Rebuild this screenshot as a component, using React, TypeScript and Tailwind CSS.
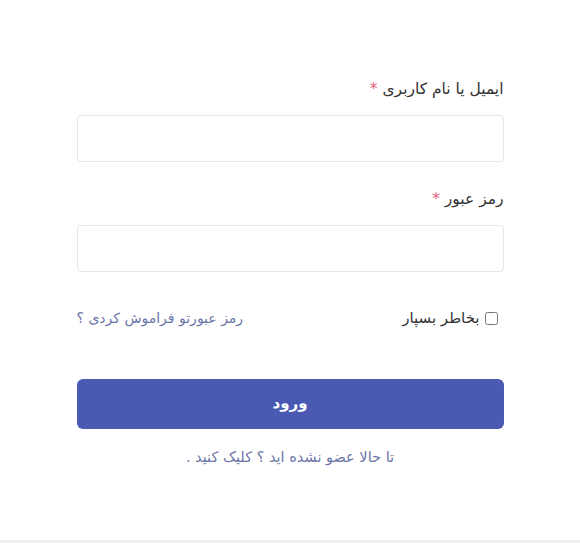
import React, { useState } from 'react';

const App: React.FC = () => {
  const [remember, setRemember] = useState(false);

  return (
    <div className="h-[543px] bg-[#efefef]" style={{ fontFamily: '"DejaVu Sans", "Noto Sans", sans-serif' }}>
      <div dir="rtl" className="h-[540px] bg-white pt-[77px]">
        <form className="mx-auto w-[427px]" onSubmit={(e) => e.preventDefault()}>
          <label className="block text-[15.5px] leading-[24px] text-[#333]">
            ایمیل یا نام کاربری <span className="text-[#e8607d]">*</span>
          </label>
          <input
            type="text"
            className="mt-[14px] block h-[47px] w-full rounded-[4px] border border-[#e6e6e6] bg-white px-3 outline-none"
          />

          <label className="mt-[25px] block text-[15.5px] leading-[24px] text-[#333]">
            رمز عبور <span className="text-[#e8607d]">*</span>
          </label>
          <input
            type="password"
            className="mt-[14px] block h-[47px] w-full rounded-[4px] border border-[#e6e6e6] bg-white px-3 outline-none"
          />

          <div className="mt-[35px] flex items-center justify-between">
            <label className="mr-[6px] flex items-center gap-[5px] text-[15px] text-[#333]">
              <input
                type="checkbox"
                checked={remember}
                onChange={() => setRemember(!remember)}
                className="h-[13px] w-[13px]"
              />
              بخاطر بسپار
            </label>
            <a href="#" className="text-[14px] text-[#6b75a9]">
              رمز عبورتو فراموش کردی ؟
            </a>
          </div>

          <button
            type="submit"
            className="mt-[49px] block h-[50px] w-full rounded-[6px] bg-[#4a5ab3] text-[15px] font-bold text-white"
          >
            ورود
          </button>

          <p className="mt-[18px] text-center text-[14.5px] text-[#6b75a9]">
            تا حالا عضو نشده اید ؟ کلیک کنید .
          </p>
        </form>
      </div>
    </div>
  );
};

export default App;
